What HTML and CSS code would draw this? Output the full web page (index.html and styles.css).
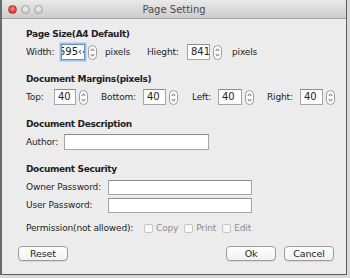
FILE: index.html
```html
<!DOCTYPE html>
<html>
<head>
<meta charset="utf-8">
<link rel="stylesheet" href="styles.css">
</head>
<body>
<div class="window">
  <div class="titlebar">
    <div class="lights">
      <span class="light red"></span>
      <span class="light"></span>
      <span class="light"></span>
    </div>
    <div class="title">Page Setting</div>
  </div>
  <div class="content">
    <section class="group">
      <h2 class="heading">Page Size(A4 Default)</h2>
      <div class="row">
        <span class="lbl w-width">Width:</span>
        <span class="spin">
          <span class="field num focus w24"><span class="scrolled">595&lsaquo;&lsaquo;</span></span>
          <svg class="stepper" viewBox="0 0 9 15" width="9" height="15"><rect x="0.5" y="0.5" width="8" height="14" rx="4" fill="#fff" stroke="#9b9b9b"/><path d="M2.8 6 L4.5 3.8 L6.2 6" fill="none" stroke="#555" stroke-width="0.9"/><path d="M2.8 9 L4.5 11.2 L6.2 9" fill="none" stroke="#555" stroke-width="0.9"/></svg>
        </span>
        <span class="lbl unit">pixels</span>
        <span class="lbl w-height">Hieght:</span>
        <span class="spin">
          <span class="field num w23">841</span>
          <svg class="stepper" viewBox="0 0 9 15" width="9" height="15"><rect x="0.5" y="0.5" width="8" height="14" rx="4" fill="#fff" stroke="#9b9b9b"/><path d="M2.8 6 L4.5 3.8 L6.2 6" fill="none" stroke="#555" stroke-width="0.9"/><path d="M2.8 9 L4.5 11.2 L6.2 9" fill="none" stroke="#555" stroke-width="0.9"/></svg>
        </span>
        <span class="lbl unit2">pixels</span>
      </div>
    </section>

    <section class="group">
      <h2 class="heading">Document Margins(pixels)</h2>
      <div class="row">
        <span class="lbl w-top">Top:</span>
        <span class="spin">
          <span class="field num w22">40</span>
          <svg class="stepper" viewBox="0 0 9 15" width="9" height="15"><rect x="0.5" y="0.5" width="8" height="14" rx="4" fill="#fff" stroke="#9b9b9b"/><path d="M2.8 6 L4.5 3.8 L6.2 6" fill="none" stroke="#555" stroke-width="0.9"/><path d="M2.8 9 L4.5 11.2 L6.2 9" fill="none" stroke="#555" stroke-width="0.9"/></svg>
        </span>
        <span class="lbl w-bottom">Bottom:</span>
        <span class="spin">
          <span class="field num w23">40</span>
          <svg class="stepper" viewBox="0 0 9 15" width="9" height="15"><rect x="0.5" y="0.5" width="8" height="14" rx="4" fill="#fff" stroke="#9b9b9b"/><path d="M2.8 6 L4.5 3.8 L6.2 6" fill="none" stroke="#555" stroke-width="0.9"/><path d="M2.8 9 L4.5 11.2 L6.2 9" fill="none" stroke="#555" stroke-width="0.9"/></svg>
        </span>
        <span class="lbl w-left">Left:</span>
        <span class="spin">
          <span class="field num w24">40</span>
          <svg class="stepper" viewBox="0 0 9 15" width="9" height="15"><rect x="0.5" y="0.5" width="8" height="14" rx="4" fill="#fff" stroke="#9b9b9b"/><path d="M2.8 6 L4.5 3.8 L6.2 6" fill="none" stroke="#555" stroke-width="0.9"/><path d="M2.8 9 L4.5 11.2 L6.2 9" fill="none" stroke="#555" stroke-width="0.9"/></svg>
        </span>
        <span class="lbl w-right">Right:</span>
        <span class="spin">
          <span class="field num w23">40</span>
          <svg class="stepper" viewBox="0 0 9 15" width="9" height="15"><rect x="0.5" y="0.5" width="8" height="14" rx="4" fill="#fff" stroke="#9b9b9b"/><path d="M2.8 6 L4.5 3.8 L6.2 6" fill="none" stroke="#555" stroke-width="0.9"/><path d="M2.8 9 L4.5 11.2 L6.2 9" fill="none" stroke="#555" stroke-width="0.9"/></svg>
        </span>
      </div>
    </section>

    <section class="group">
      <h2 class="heading">Document Description</h2>
      <div class="row">
        <span class="lbl w-author">Author:</span>
        <span class="field text w-auth"></span>
      </div>
    </section>

    <section class="group security">
      <h2 class="heading">Document Security</h2>
      <div class="row">
        <span class="lbl w-pass">Owner Password:</span>
        <span class="field text pw"></span>
      </div>
      <div class="row">
        <span class="lbl w-pass">User Password:</span>
        <span class="field text pw"></span>
      </div>
      <div class="row perm">
        <span class="lbl w-perm">Permission(not allowed):</span>
        <span class="check"><span class="box"></span>Copy</span>
        <span class="check"><span class="box"></span>Print</span>
        <span class="check"><span class="box"></span>Edit</span>
      </div>
    </section>

    <div class="buttons">
      <span class="btn">Reset</span>
      <span class="spacer"></span>
      <span class="btn">Ok</span>
      <span class="btn">Cancel</span>
    </div>
  </div>
</div>
</body>
</html>
```

FILE: styles.css
```css
html, body {
  margin: 0;
  padding: 0;
}
body {
  width: 350px;
  height: 278px;
  background: #d9d9d9;
  font-family: "DejaVu Sans", "Open Sans", sans-serif;
  font-size: 9px;
  letter-spacing: -0.15px;
  color: #1e1e1e;
  overflow: hidden;
}
.window {
  width: 344px;
  height: 274px;
  border-left: 2px solid #6b6b6b;
  border-right: 1px solid #5c5c5c;
  border-bottom: 1px solid #5c5c5c;
  background: #ececec;
  display: flex;
  flex-direction: column;
}
.titlebar {
  height: 19px;
  flex: none;
  background: linear-gradient(#e9e9e9, #cdcdcd);
  border-bottom: 1px solid #a5a5a5;
  display: flex;
  align-items: center;
  position: relative;
  box-sizing: border-box;
}
.lights {
  display: flex;
  gap: 4px;
  margin-left: 6px;
}
.light {
  width: 9px;
  height: 9px;
  border-radius: 50%;
  background: radial-gradient(circle at 50% 35%, #f0f0f0, #c2c2c2);
  border: 0.5px solid #a3a3a3;
  box-sizing: border-box;
}
.light.red {
  background: radial-gradient(circle at 50% 40%, #ff8a80, #e0312b 70%);
  border-color: #b13a36;
}
.title {
  position: absolute;
  left: 0;
  right: 0;
  text-align: center;
  color: #4a4a4a;
  font-size: 10px;
  letter-spacing: 0;
}
.content {
  padding: 9px 0 0 24px;
  display: flex;
  flex-direction: column;
  flex: 1;
}
.group {
  display: flex;
  flex-direction: column;
  gap: 4px;
  margin-bottom: 13px;
}
.group.security {
  gap: 2px;
  margin-bottom: 0;
}
.heading {
  margin: 0;
  font-size: 9px;
  font-weight: bold;
  line-height: 12px;
  height: 12px;
  letter-spacing: -0.35px;
}
.security .heading {
  margin-bottom: 2px;
}
.row {
  display: flex;
  align-items: center;
  height: 16px;
}
.row.perm {
  margin-top: 5px;
}
.lbl {
  white-space: nowrap;
  flex: none;
}
.w-width { width: 35px; }
.unit { width: 42px; margin-left: 8px; }
.w-height { width: 40px; }
.unit2 { margin-left: 10px; }
.w-top { width: 28px; }
.w-bottom { width: 42px; margin-left: 13px; }
.w-left { width: 26px; margin-left: 14px; }
.w-right { width: 33px; margin-left: 13px; }
.w-author { width: 38px; }
.w-pass { width: 82px; }
.w-perm { width: 118px; }

.spin {
  display: flex;
  align-items: center;
  gap: 3px;
}
.field {
  box-sizing: border-box;
  background: #fff;
  border: 1px solid #a5a5a5;
  border-top-color: #8c8c8c;
  height: 16px;
  line-height: 14px;
  display: block;
  overflow: hidden;
  white-space: nowrap;
  flex: none;
}
.num {
  padding-left: 3px;
  font-size: 10px;
  letter-spacing: 0;
}
.w22 { width: 22px; }
.w23 { width: 23px; }
.w24 { width: 24px; }
.focus {
  border: 1px solid #5b8fd6;
  box-shadow: 0 0 0 1.5px #9cc2ef;
  padding-left: 0;
}
.scrolled {
  display: inline-block;
  margin-left: -3px;
}
.stepper {
  display: block;
  flex: none;
}
.w-auth { width: 145px; }
.pw { width: 144px; height: 15px; }

.check {
  display: flex;
  align-items: center;
  color: #8d8d8d;
  margin-right: 6px;
  white-space: nowrap;
}
.box {
  width: 9px;
  height: 9px;
  box-sizing: border-box;
  border: 1px solid #c4c4c4;
  border-radius: 2px;
  background: #f7f7f7;
  margin-right: 3px;
}

.buttons {
  display: flex;
  align-items: center;
  margin: auto 12px 13px -8px;
  gap: 8px;
}
.spacer { flex: 1; }
.btn {
  box-sizing: border-box;
  width: 50px;
  height: 15px;
  border: 1px solid #9b9b9b;
  border-radius: 4px;
  background: linear-gradient(#ffffff, #f1f1f1);
  box-shadow: 0 1px 0 rgba(0,0,0,0.08);
  text-align: center;
  line-height: 13px;
  font-size: 9.5px;
  color: #1e1e1e;
}
```
